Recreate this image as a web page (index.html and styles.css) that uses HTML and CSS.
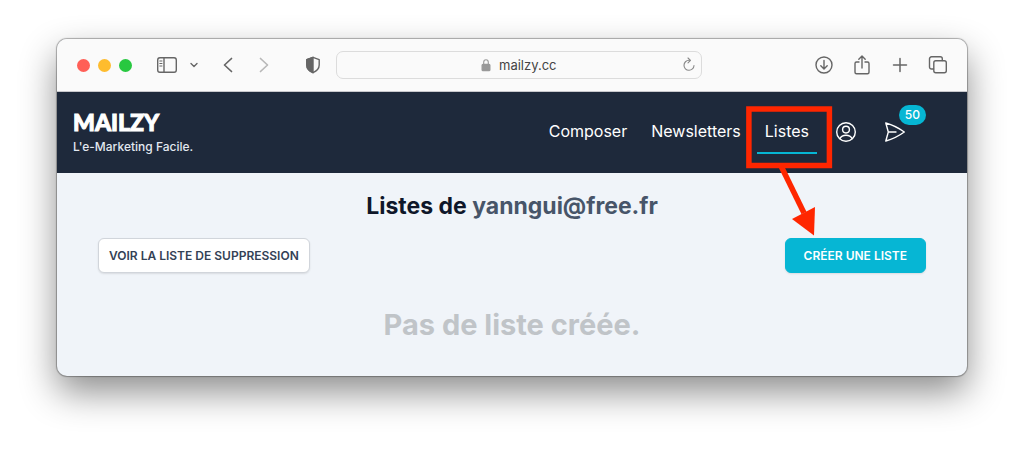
FILE: index.html
```html
<!DOCTYPE html>
<html lang="fr">
  <head>
    <meta charset="UTF-8" />
    <meta name="viewport" content="width=device-width, initial-scale=1.0" />
    <title>Mailzy - Listes</title>
    <link rel="stylesheet" href="styles.css">
  </head>
  <body>
    <div class="window">
      <!-- BROWSER TOOLBAR -->
      <div class="toolbar">
        <div class="lights">
          <span class="light red"></span>
          <span class="light yellow"></span>
          <span class="light green"></span>
        </div>
        <div class="tools-left">
          <button class="tool" aria-label="Barre latérale">
            <svg width="22" height="18" viewBox="0 0 22 18"><rect x="1.7" y="1.7" width="18.6" height="14.6" rx="2.2" /><path d="M8 2v14" /><path d="M3.8 5h2.2M3.8 7.5h2.2M3.8 10h2.2" stroke-width="1" /></svg>
          </button>
          <button class="tool" aria-label="Groupes d'onglets">
            <svg width="10" height="18" viewBox="0 0 10 18"><path d="M2 7.5l3 3 3-3" /></svg>
          </button>
        </div>
        <div class="history">
          <button class="tool" aria-label="Précédent">
            <svg width="12" height="18" viewBox="0 0 12 18"><path d="M9.500 2.500L2.500 9l7 6.500" stroke-width="1.7" /></svg>
          </button>
          <button class="tool dim" aria-label="Suivant">
            <svg width="12" height="18" viewBox="0 0 12 18"><path d="M2.500 2.500L9.500 9l-7 6.500" stroke-width="1.7" /></svg>
          </button>
        </div>
        <button class="tool" aria-label="Confidentialité">
          <svg width="16" height="18" viewBox="0 0 16 18"><path d="M8 1.300L14.200 3.600V9c0 3.600-2.500 6-6.200 7.700C4.300 15 1.800 12.600 1.800 9V3.600z" /><path class="solid" d="M8 1.300v15.400C4.300 15 1.800 12.600 1.800 9V3.600z" /></svg>
        </button>
        <div class="address">
          <svg class="lock" width="10" height="14" viewBox="0 0 10 14"><rect class="solid" x="1.200" y="6.500" width="7.600" height="6" rx="0.800" /><path d="M2.700 6V4.200a2.300 2.500 0 0 1 4.600 0V6" stroke-width="1.100" /></svg>
          <input type="text" value="mailzy.cc" aria-label="Adresse" />
          <button class="tool reload" aria-label="Recharger">
            <svg width="14" height="16" viewBox="0 0 14 16"><path d="M8 3.300H7A5 5 0 1 0 12 8.500M6 1l2.500 2.400L6 5.800" stroke-width="1.100" /></svg>
          </button>
        </div>
        <div class="tools-right">
          <button class="tool" aria-label="Téléchargements">
            <svg width="20" height="20" viewBox="0 0 20 20"><circle cx="10" cy="10" r="8" /><path d="M10 5.500v8.300M6.800 10.800l3.200 3.200 3.200-3.200" /></svg>
          </button>
          <button class="tool" aria-label="Partager">
            <svg width="20" height="22" viewBox="0 0 20 22"><path d="M7 8H4.500a1.500 1.500 0 0 0-1.500 1.500v8.700a1.500 1.500 0 0 0 1.500 1.500h11a1.500 1.500 0 0 0 1.500-1.500V9.500A1.500 1.500 0 0 0 15.500 8H13M10 14V2.300M6.800 5.200L10 2l3.200 3.200" /></svg>
          </button>
          <button class="tool" aria-label="Nouvel onglet">
            <svg width="20" height="20" viewBox="0 0 20 20"><path d="M10 3.500v13M3.500 10h13" stroke-width="1.500" /></svg>
          </button>
          <button class="tool" aria-label="Tous les onglets">
            <svg width="20" height="20" viewBox="0 0 20 20"><rect x="5.800" y="5.800" width="12.500" height="12" rx="2" /><path d="M5.500 14H3.500a2 2 0 0 1-2-2V3.800a2 2 0 0 1 2-2h8.800a2 2 0 0 1 2 2v1.700" /></svg>
          </button>
        </div>
      </div>

      <!-- SITE HEADER -->
      <header class="header">
        <a class="brand" href="#">
          <span class="logo">MAILZY</span>
          <span class="tagline">L'e-Marketing Facile.</span>
        </a>
        <nav class="nav">
          <a class="nav-link" href="#">Composer</a>
          <a class="nav-link" href="#">Newsletters</a>
          <a class="nav-link active" href="#">Listes</a>
        </nav>
        <a class="icon-link" href="#" aria-label="Compte">
          <svg width="22" height="22" viewBox="0 0 22 22"><circle cx="11" cy="11" r="9.300" /><circle cx="11" cy="8.600" r="3.400" /><path d="M4.800 17.600C6 15.200 8.300 14.200 11 14.200s5 1 6.200 3.400" /></svg>
        </a>
        <a class="icon-link credits" href="#" aria-label="Crédits">
          <svg width="22" height="22" viewBox="0 0 22 22"><path d="M4.300 11L1.800 2C8.500 3.900 14.800 7 20.300 11c-5.500 4-11.800 7.100-18.500 9zM4.300 11H12" /></svg>
          <span class="badge">50</span>
        </a>
      </header>

      <!-- LISTS -->
      <main class="content">
        <h1>Listes de <span class="email">yanngui@free.fr</span></h1>
        <div class="actions">
          <button class="btn">VOIR LA LISTE DE SUPPRESSION</button>
          <button class="btn primary">CRÉER UNE LISTE</button>
        </div>
        <p class="empty">Pas de liste créée.</p>
      </main>

      <!-- Red frame and arrow pointing at the create button -->
      <svg class="callout" width="100" height="136" viewBox="0 0 100 136">
        <rect x="8.900" y="8" width="80.500" height="56.500" />
        <path d="M41.500 66L64 112" />
        <polygon points="52,118 75,106 74,134.500" />
      </svg>
    </div>
  </body>
</html>
```
FILE: styles.css
```css
* {
  box-sizing: border-box;
}

body {
  font-family: Inter, "Liberation Sans", sans-serif;
  background: white;
  margin: 0;
  padding: 39px 57px;
  min-height: 100vh;
}

svg {
  display: block;
  fill: none;
  stroke: currentColor;
  stroke-width: 1.4;
  stroke-linecap: round;
  stroke-linejoin: round;
}

svg .solid {
  fill: currentColor;
}

a {
  color: inherit;
  text-decoration: none;
}

button {
  font-family: inherit;
  cursor: pointer;
}

.window {
  position: relative;
  border-radius: 10px;
  background: #f0f4f9;
  box-shadow: 0 0 1px 1px rgba(0, 0, 0, 0.3), 0 16px 36px rgba(0, 0, 0, 0.45);
}

/* Browser toolbar */
.toolbar {
  display: flex;
  align-items: center;
  height: 53px;
  padding: 0 19px 0 20px;
  background: #fafafa;
  border-bottom: 1px solid #c8c8cc;
  border-radius: 10px 10px 0 0;
  color: #666;
}

.lights {
  display: flex;
  gap: 8px;
  margin-right: 24px;
}

.light {
  width: 13px;
  height: 13px;
  border-radius: 50%;
}

.red {
  background: #ff5f57;
}

.yellow {
  background: #febc2e;
}

.green {
  background: #28c840;
}

.tool {
  padding: 0;
  border: none;
  background: none;
  color: inherit;
}

.tool.dim {
  color: #b8b8b8;
}

.tools-left {
  display: flex;
  gap: 11px;
}

.history {
  display: flex;
  gap: 24px;
  margin: 0 35px 0 23px;
}

.address {
  display: flex;
  flex: 1;
  align-items: center;
  justify-content: center;
  position: relative;
  height: 28px;
  margin: 0 112px 0 15px;
  border: 1px solid #dcdcdc;
  border-radius: 7px;
}

.address input {
  width: 58px;
  margin-left: 8px;
  padding: 0;
  border: none;
  background: none;
  font-family: inherit;
  font-size: 13px;
  color: #444;
}

.lock {
  color: #999;
}

.reload {
  position: absolute;
  right: 5px;
  color: #888;
}

.tools-right {
  display: flex;
  align-items: center;
  gap: 18px;
}

/* Site header */
.header {
  display: flex;
  align-items: center;
  height: 81px;
  padding: 0 41px 2px 16px;
  background: #1e293b;
  color: white;
}

.brand {
  display: flex;
  flex-direction: column;
  margin-right: auto;
}

.logo {
  font-family: Lato, Inter, sans-serif;
  font-size: 23px;
  font-weight: 900;
  line-height: 30px;
  -webkit-text-stroke: 1px white;
}

.tagline {
  font-size: 12px;
  font-weight: 500;
  line-height: 20px;
  color: #e2e8f0;
}

.nav {
  display: flex;
  gap: 8px;
  margin-right: 18px;
}

.nav-link {
  padding: 8px;
  border-bottom: 2px solid transparent;
  font-size: 16px;
  line-height: 26px;
}

.nav-link.active {
  border-color: #06b6d4;
}

.icon-link {
  position: relative;
}

.credits {
  margin: 0 20px 0 27px;
}

.badge {
  position: absolute;
  top: -16px;
  right: -20px;
  padding: 0 6px;
  border-radius: 10px;
  background: #06b6d4;
  font-size: 12px;
  font-weight: 500;
  line-height: 20px;
}

/* Lists page */
.content {
  padding: 17px 41px 31px;
  text-align: center;
}

h1 {
  margin: 0 0 16px;
  font-size: 23px;
  font-weight: 700;
  line-height: 32px;
  color: #0f172a;
}

.email {
  color: #475569;
}

.actions {
  display: flex;
  justify-content: space-between;
  margin-bottom: 32px;
}

.btn {
  height: 35px;
  padding: 0 10px;
  border: 1px solid #d1d5db;
  border-radius: 6px;
  background: white;
  box-shadow: 0 1px 2px rgba(0, 0, 0, 0.1);
  font-size: 12px;
  font-weight: 600;
  color: #334155;
}

.btn.primary {
  padding: 0 18px;
  border-color: #06b6d4;
  background: #06b6d4;
  color: white;
}

.empty {
  margin: 0;
  font-size: 29px;
  font-weight: 700;
  line-height: 40px;
  color: #c0c4c8;
}

/* Callout */
.callout {
  position: absolute;
  top: 62px;
  right: 127px;
  color: #ff2600;
  stroke-width: 5.5;
  stroke-linecap: butt;
  stroke-linejoin: miter;
  pointer-events: none;
}

.callout polygon {
  fill: currentColor;
  stroke: none;
}
```
